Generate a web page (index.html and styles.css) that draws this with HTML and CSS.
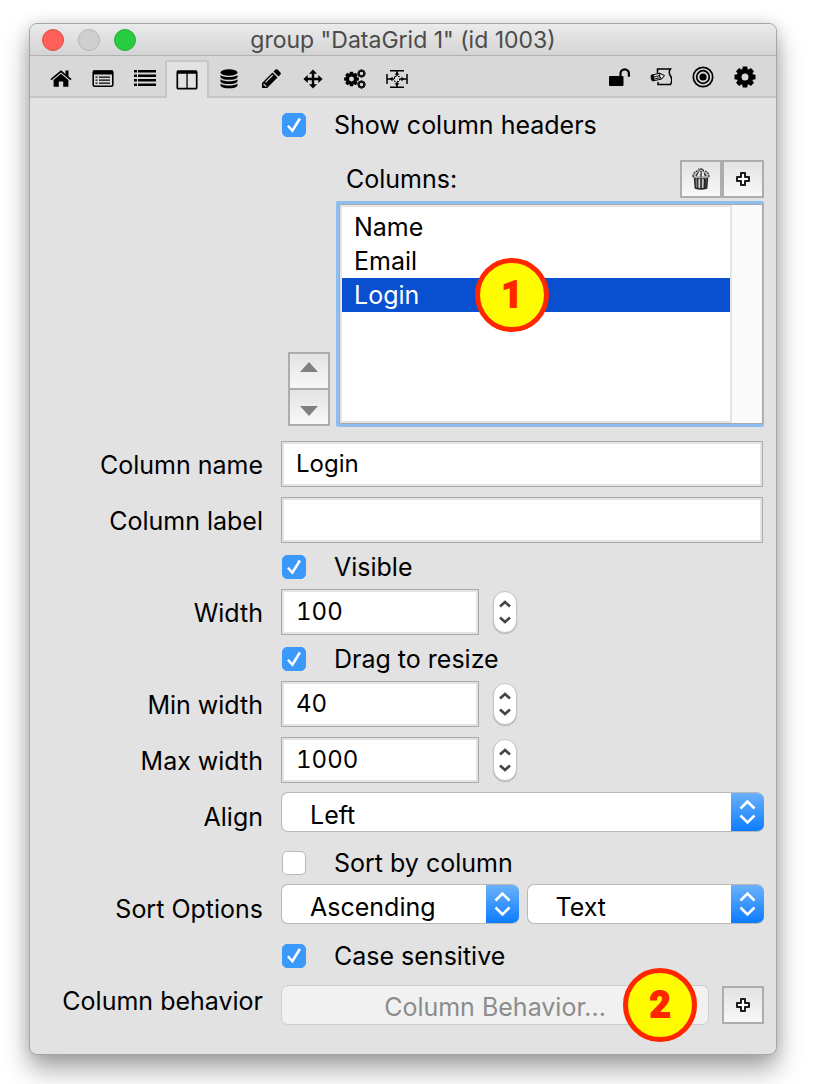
FILE: index.html
```html
<!DOCTYPE html>
<html lang="en">
<head>
<meta charset="utf-8">
<title>group "DataGrid 1" (id 1003)</title>
<link rel="stylesheet" href="styles.css">
</head>
<body>
<svg class="defs" aria-hidden="true">
  <defs>
    <symbol id="i-plus" viewBox="0 0 16 16"><path d="M6 2h4v4h4v4h-4v4H6v-4H2V6h4z" fill="#fff" stroke="#1c1c1c" stroke-width="2" stroke-linejoin="round"/></symbol>
    <symbol id="i-up" viewBox="0 0 14 8"><path d="M2 6.500L7 2l5 4.500" fill="none" stroke="currentColor" stroke-width="2.600"/></symbol>
    <symbol id="i-down" viewBox="0 0 14 8"><path d="M2 1.500L7 6l5-4.500" fill="none" stroke="currentColor" stroke-width="2.600"/></symbol>
    <symbol id="i-updown" viewBox="0 0 33 40"><path d="M9.500 16.500l7-7 7 7M9.500 23.500l7 7 7-7" fill="none" stroke="#fff" stroke-width="2.600"/></symbol>
    <g id="teeth"><path id="tooth" d="M-2.200-10.500h4.400l.8 4h-6z"/><use href="#tooth" transform="rotate(45)"/><use href="#tooth" transform="rotate(90)"/><use href="#tooth" transform="rotate(135)"/><use href="#tooth" transform="rotate(180)"/><use href="#tooth" transform="rotate(225)"/><use href="#tooth" transform="rotate(270)"/><use href="#tooth" transform="rotate(315)"/></g>
    <g id="gear"><use href="#teeth"/><circle r="5.800" fill="none" stroke="#000" stroke-width="4.600"/></g>
    <g id="small-gear"><use href="#teeth"/><circle r="6.200" fill="none" stroke="#000" stroke-width="3.400"/></g>
  </defs>
</svg>
<main class="window">
  <header class="titlebar">
    <div class="lights">
      <button class="light close" aria-label="Close"></button>
      <button class="light minimize" aria-label="Minimize"></button>
      <button class="light zoom" aria-label="Zoom"></button>
    </div>
    <h1>group "DataGrid 1" (id 1003)</h1>
  </header>
  <nav class="toolbar" aria-label="Inspector sections">
    <div class="tools">
      <button class="tool" aria-label="Basic"><svg viewBox="0 0 22 22"><path d="M11 5.800L3.600 12v6.700h5.200v-5.200h4.400v5.200h5.200V12z"/><path d="M1 11.600L11 3.300l10 8.300" fill="none" stroke="#000" stroke-width="1.700"/><path d="M15.500 2.500h3v6.500l-3-2.500z"/></svg></button>
      <button class="tool" aria-label="Custom"><svg viewBox="0 0 22 22"><rect x="1.200" y="3" width="19.600" height="15.200" rx="1.500" fill="none" stroke="#000" stroke-width="1.600"/><path d="M1 2.600h20v4H1zM3.500 8.500h2v1.300h-2zm3.500 0h11v1.300H7zM3.500 11.500h2v1.300h-2zm3.500 0h11v1.300H7zM3.500 14.500h2v1.300h-2zm3.500 0h11v1.300H7z"/></svg></button>
      <button class="tool" aria-label="Contents"><svg viewBox="0 0 22 22"><path d="M0 2h3v2.500H0zm4 0h18v2.500H4zM0 6.500h3V9H0zm4 0h18V9H4zM0 11h3v2.500H0zm4 0h18v2.500H4zM0 15.500h3V18H0zm4 0h18V18H4z"/></svg></button>
      <button class="tool active" aria-label="Columns"><svg viewBox="0 0 22 22"><rect x="1.300" y="2.300" width="19.400" height="17.400" rx="1" fill="none" stroke="#000" stroke-width="1.700"/><path d="M1 1.500h20v3.300H1zM10.400 4h1.300v15h-1.300z"/></svg></button>
      <button class="tool" aria-label="Database"><svg viewBox="0 0 22 22"><ellipse cx="11" cy="4.500" rx="8.500" ry="3.200"/><path d="M2.500 7c3 2.800 14 2.800 17 0v2c-1 3.800-16 3.800-17 0zM2.500 11.200c3 2.800 14 2.800 17 0v2c-1 3.800-16 3.800-17 0zM2.500 15.400c3 2.800 14 2.800 17 0v2c-1 3.800-16 3.800-17 0z"/></svg></button>
      <button class="tool" aria-label="Edit"><svg viewBox="0 0 22 22"><path d="M2 15L12.500 4.500l5 5L7 20H2zM13.500 3.500L15.500 1.600q1-.8 2 0l3 3q.8 1 0 2l-2 2z"/><path d="M5.500 14.300l7.300-7.300M3.500 15.800l2.700 2.700" stroke="#d8d8d8" stroke-width="1.200"/></svg></button>
      <button class="tool" aria-label="Position"><svg viewBox="0 0 22 22"><path d="M11 1.400l4 4.300h-2.800v4.100h4.100V7l4.300 4-4.300 4v-2.800h-4.100v4.100H15l-4 4.300-4-4.300h2.800v-4.100H5.700V15l-4.300-4 4.300-4v2.800h4.100V5.700H7z"/></svg></button>
      <button class="tool" aria-label="Behavior"><svg viewBox="0 0 22 22"><use href="#gear" transform="translate(7.500 11) scale(.7)"/><use href="#small-gear" transform="translate(17.500 5.500) scale(.4)"/><use href="#small-gear" transform="translate(17.500 16.500) scale(.4)"/></svg></button>
      <button class="tool" aria-label="Geometry"><svg viewBox="0 0 22 22"><path d="M4 2.800h14M4 19.200h14M1 6v10M21 6v10M1 11h7M14 11h7M11 3v5M11 14v5" fill="none" stroke="#000" stroke-width="1.500"/><path d="M8.500 6.800h5L11 4zM8.500 15.200h5L11 18zM6.500 8.500v5L4 11zM15.500 8.500v5L18 11z"/><rect x="8.500" y="8.500" width="5" height="5" fill="none" stroke="#000" stroke-dasharray="2 1.500"/></svg></button>
    </div>
    <div class="tools end">
      <button class="tool" aria-label="Unlock"><svg viewBox="0 0 22 22"><rect x="1" y="10" width="14.500" height="10" rx="1"/><path d="M12.500 10.500V7.500a4.200 4.200 0 0 1 8.400 0v3.200" fill="none" stroke="#000" stroke-width="2.200"/></svg></button>
      <button class="tool" aria-label="Script"><svg viewBox="0 0 22 22"><path d="M7.500 7V3h13q-2.500 3 0 7t0 8.500H8V16" fill="none" stroke="#000" stroke-width="1.500"/><path d="M1.200 9.200l8.500-2 4.800 2.300-2.700 3.500-9.300 2q-2-2.500-1.300-5.800z" fill="#ddd" stroke="#000"/><path d="M4 11l6-1.500M4.500 13l6.500-1.500M9.700 7.300q-.8 3 1.300 5.500" fill="none" stroke="#000"/><path d="M1 9.300l3-.8q-.8 3 .8 5.800l-3 .5z"/></svg></button>
      <button class="tool" aria-label="Target"><svg viewBox="0 0 22 22"><circle cx="11" cy="11" r="9.700" fill="none" stroke="#000" stroke-width="1.700"/><circle cx="11" cy="11" r="6.300" fill="none" stroke="#000" stroke-width="1.700"/><circle cx="11" cy="11" r="3.600"/></svg></button>
      <button class="tool" aria-label="Settings"><svg viewBox="0 0 22 22"><use href="#gear" transform="translate(11 11)"/></svg></button>
    </div>
  </nav>

  <form class="panel" onsubmit="return false">
    <div class="row check first"><input type="checkbox" id="headers" checked><label for="headers">Show column headers</label></div>

    <div class="columns">
      <div class="columns-head">
        <span id="columns-label">Columns:</span>
        <div class="pair">
          <button class="square" aria-label="Delete column"><svg class="trash" viewBox="0 0 18 22"><path d="M2.500 10h13l-.8 10q-5.700 2-11.400 0z" fill="#777" stroke="#222" stroke-width="1.400"/><path d="M5.500 11l.7 9M9 11v9" stroke="#333" stroke-width="1.400"/><path d="M7.300 11v9M11 11v9" stroke="#ddd" stroke-width="1.400"/><path d="M13 11l-.5 9" stroke="#222" stroke-width="2"/><path d="M1 8.500Q1 3.500 7 2.500V1h4v1.500q6 1 6 6l-2 2H3z" fill="#bbb" stroke="#333" stroke-width="1.300" stroke-dasharray="2 1"/><path d="M4 8l3-4M9 3v6M14 8l-3-4" stroke="#333" stroke-width="1.300"/><path d="M6 8l2-4M11 8V4" stroke="#fff" stroke-width="1.500"/></svg></button>
          <button class="square" aria-label="Add column"><svg class="plus"><use href="#i-plus"/></svg></button>
        </div>
      </div>
      <div class="columns-body">
        <div class="movers">
          <button class="square up" aria-label="Move up"><svg class="tri" viewBox="0 0 18 10"><path d="M9 0l9 10H0z"/></svg></button>
          <button class="square down" aria-label="Move down"><svg class="tri" viewBox="0 0 18 10"><path d="M0 0h18L9 10z"/></svg></button>
        </div>
        <div class="listbox">
          <ul role="listbox" aria-labelledby="columns-label" tabindex="0">
            <li role="option">Name</li>
            <li role="option">Email</li>
            <li role="option" aria-selected="true">Login<span class="badge on-item">1</span></li>
          </ul>
          <div class="gutter"></div>
        </div>
      </div>
    </div>

    <div class="row"><label class="name" for="col-name">Column name</label><input class="field" type="text" id="col-name" value="Login"></div>
    <div class="row spaced"><label class="name" for="col-label">Column label</label><input class="field" type="text" id="col-label"></div>
    <div class="row check"><input type="checkbox" id="visible" checked><label for="visible">Visible</label></div>
    <div class="row"><label class="name" for="width">Width</label><input class="field short" type="text" id="width" value="100">
      <div class="stepper"><button aria-label="Increase width"><svg><use href="#i-up"/></svg></button><button aria-label="Decrease width"><svg><use href="#i-down"/></svg></button></div></div>
    <div class="row check"><input type="checkbox" id="resize" checked><label for="resize">Drag to resize</label></div>
    <div class="row"><label class="name" for="min">Min width</label><input class="field short" type="text" id="min" value="40">
      <div class="stepper"><button aria-label="Increase minimum"><svg><use href="#i-up"/></svg></button><button aria-label="Decrease minimum"><svg><use href="#i-down"/></svg></button></div></div>
    <div class="row spaced"><label class="name" for="max">Max width</label><input class="field short" type="text" id="max" value="1000">
      <div class="stepper"><button aria-label="Increase maximum"><svg><use href="#i-up"/></svg></button><button aria-label="Decrease maximum"><svg><use href="#i-down"/></svg></button></div></div>
    <div class="row popup-row after-field"><label class="name" for="align">Align</label>
      <div class="popup"><select id="align"><option>Left</option><option>Center</option><option>Right</option></select><svg><use href="#i-updown"/></svg></div></div>
    <div class="row check after-popup"><input type="checkbox" id="sort"><label for="sort">Sort by column</label></div>
    <div class="row popup-row"><label class="name" for="direction">Sort Options</label>
      <div class="popups">
        <div class="popup"><select id="direction"><option>Ascending</option><option>Descending</option></select><svg><use href="#i-updown"/></svg></div>
        <div class="popup"><select id="type" aria-label="Sort type"><option>Text</option><option>Numeric</option></select><svg><use href="#i-updown"/></svg></div>
      </div></div>
    <div class="row check tall"><input type="checkbox" id="case" checked><label for="case">Case sensitive</label></div>
    <div class="row behavior-row"><label class="name" for="behavior">Column behavior</label>
      <div class="behavior"><button class="push" id="behavior" disabled>Column Behavior...</button><span class="badge on-button">2</span></div>
      <button class="square" aria-label="Add behavior"><svg class="plus"><use href="#i-plus"/></svg></button></div>
  </form>
</main>
</body>
</html>
```
FILE: styles.css
```css
* { box-sizing: border-box; }

body {
  margin: 0;
  padding: 23px 41px 29px 29px;
  background: #fff;
  color: #000;
  font: 25px/30px Inter, "Liberation Sans", sans-serif;
}

button, input, select { font: inherit; color: inherit; margin: 0; padding: 0; }
button { display: flex; align-items: center; justify-content: center; background: none; border: 0; }

.defs { position: absolute; width: 0; height: 0; }

.window {
  border: 1px solid #a6a6a6;
  border-radius: 8px;
  background: #e2e2e2;
  box-shadow: 0 14px 26px rgba(0, 0, 0, .36), 0 0 14px rgba(0, 0, 0, .12);
}

.titlebar {
  display: grid;
  grid-template-columns: 1fr auto 1fr;
  align-items: center;
  height: 32px;
  padding: 0 12px;
  border-bottom: 1px solid #b1b1b1;
  border-radius: 7px 7px 0 0;
  background: linear-gradient(#ebebeb, #d4d4d4);
}
.titlebar h1 { margin: 0; font-size: 23px; line-height: 30px; font-weight: 400; color: #4b4b4b; }
.lights { display: flex; gap: 14px; }
.light { width: 22px; height: 22px; border: 1px solid #b5b5b5; border-radius: 50%; background: #cfcfcf; }
.close { background: #ff6059; border-color: #e24b45; }
.zoom { background: #29cc41; border-color: #1faf33; }

.toolbar {
  display: flex;
  justify-content: space-between;
  height: 42px;
  padding: 4px 10px 0;
  background: #d8d8d8;
  box-shadow: inset 0 -2px #c6c6c6;
}
.tools { display: flex; }
.tool { width: 42px; height: 38px; }
.tools.end .tool { padding-bottom: 4px; }
.tool svg { width: 22px; height: 22px; }
.tool.active {
  width: 44px;
  margin: 0 -1px;
  border: 2px solid #c6c6c6;
  border-bottom: 0;
  border-radius: 3px 3px 0 0;
  background: #e2e2e2;
}

.panel { padding: 0 12px 29px; }

.row { display: flex; align-items: center; min-height: 46px; }
.name { flex: none; width: 221px; margin-right: 18px; padding-top: 2px; text-align: right; }
.spaced { margin-top: 10px; }

.check { padding: 2px 0 0 240px; gap: 28px; }
.check.first { min-height: 54px; padding-top: 0; }
.check.after-popup { min-height: 52px; padding-top: 10px; }
.check.tall { min-height: 61px; }
input[type="checkbox"] {
  appearance: none;
  flex: none;
  width: 24px;
  height: 24px;
  border: 1px solid #b9b9b9;
  border-radius: 5px;
  background: #fff;
}
input[type="checkbox"]:checked { display: grid; place-items: center; border-color: #3b99fc; background: #3b99fc; }
input[type="checkbox"]:checked::before {
  content: "";
  width: 14px;
  height: 16px;
  background: #fff;
  clip-path: polygon(0 60%, 14% 50%, 36% 74%, 84% 4%, 100% 14%, 40% 98%);
}

.field {
  flex: 1;
  min-width: 0;
  height: 46px;
  margin-right: 1px;
  padding: 0 14px 2px;
  border: 1px solid #a9a9a9;
  border-radius: 0;
  background: #fff;
  box-shadow: inset 0 0 0 2px #e4e4e4;
  outline: 0;
  font-size: 24px;
}
.field.short { flex: 0 0 198px; margin-right: 0; font-variant-numeric: tabular-nums; }

.stepper {
  width: 24px;
  height: 42px;
  margin-left: 14px;
  padding: 4px 0;
  border: 1px solid #c4c4c4;
  border-radius: 12px;
  background: #fff;
  box-shadow: 0 1px 1px #b5b5b5;
}
.stepper button { width: 100%; height: 16px; color: #444; }
.stepper svg { width: 14px; height: 8px; }

.square {
  width: 42px;
  height: 38px;
  border: 2px solid #adadad;
  background: linear-gradient(#e3e3e3, #f8f8f8);
}
.plus { width: 16px; height: 16px; }
.trash { width: 18px; height: 22px; }
.tri { width: 18px; height: 10px; fill: #808080; }

.columns { padding: 8px 0 14px 246px; }
.columns-head { display: flex; justify-content: space-between; align-items: center; margin-bottom: 3px; padding-left: 58px; }
.pair { display: flex; }
.columns-body { display: flex; align-items: flex-end; gap: 6px; }
.movers { padding-bottom: 1px; }
.movers .up { padding-bottom: 8px; }
.movers .down { margin-top: -2px; padding-top: 8px; }

.listbox {
  flex: 1;
  display: flex;
  height: 226px;
  border: 3px solid #8fbdef;
  border-right-width: 1px;
  border-radius: 2px;
  background: #fff;
  box-shadow: inset 0 0 0 1px #a9a9a9;
}
.listbox ul {
  flex: 1;
  margin: 1px 0 1px 1px;
  padding: 3px 0 0;
  border: 2px solid #e4e4e4;
  list-style: none;
  outline: 0;
}
.listbox li { position: relative; height: 34px; padding: 2px 12px; }
.listbox li[aria-selected="true"] { background: #0850d0; color: #fff; }
.gutter { width: 30px; margin: 1px 1px 1px 0; background: #fafafa; }

.badge {
  position: absolute;
  display: grid;
  place-items: center;
  width: 74px;
  height: 74px;
  border: 5px solid #ff2600;
  border-radius: 50%;
  background: #fffb00;
  color: #ff2600;
  font: 700 36px/36px "Liberation Sans Narrow", Roboto, sans-serif;
  -webkit-text-stroke: 2px #ff2600;
}
.on-item { left: 133px; top: -20px; z-index: 1; }
.on-button { right: 12px; top: -17px; }

.popup-row { min-height: 40px; }
.popup-row.after-field { margin-top: 9px; }
.popup-row .name { padding-top: 9px; }
.popups { flex: 1; display: grid; grid-template-columns: 1fr 1fr; gap: 8px; }
.popup { flex: 1; display: flex; height: 40px; border-radius: 7px; overflow: hidden; background: #fff; border: 1px solid #b8b8b8; border-right: 0; }
.popup select { flex: 1; min-width: 0; padding: 6px 0 0 28px; border: 0; appearance: none; background: none; outline: 0; }
.popup svg { width: 33px; height: 40px; margin: -1px 0; background: linear-gradient(#6cb3fa, #0a7aff); }

.behavior-row { min-height: 40px; }
.behavior-row .name { padding: 0 0 8px; }
.behavior { flex: 1; position: relative; margin-right: 13px; }
.push {
  width: 100%;
  height: 40px;
  padding-top: 4px;
  border: 1px solid #cdcdcd;
  border-radius: 7px;
  background: #f1f1f1;
  color: #8c8c8c;
}
```
